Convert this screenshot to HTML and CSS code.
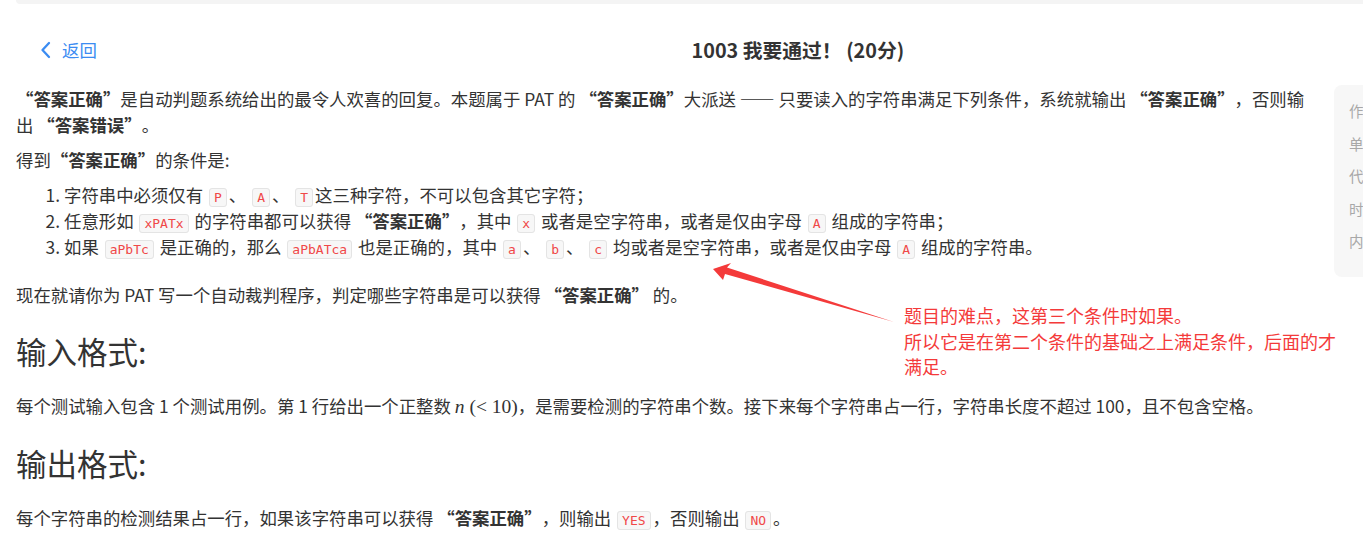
FILE: index.html
```html
<!DOCTYPE html>
<html lang="zh-CN">
<head>
<meta charset="utf-8">
<title>1003 我要通过！</title>
<link rel="stylesheet" href="styles.css">
</head>
<body>
<div class="topbar"></div>
<header class="header">
  <a class="back" href="#">
    <svg class="back-icon" width="12" height="18" viewBox="0 0 12 18"><path d="M9 2 L2.5 9 L9 16" fill="none" stroke="#3b8cf2" stroke-width="2.3" stroke-linecap="round" stroke-linejoin="round"/></svg>
    <span>返回</span>
  </a>
  <h1 class="title">1003 我要通过！ (20分)</h1>
</header>
<div class="main">
  <div class="content">
    <p class="p-first"><b>“答案正确”</b>是自动判题系统给出的最令人欢喜的回复。本题属于 PAT 的 <b>“答案正确”</b>大派送 —— 只要读入的字符串满足下列条件，系统就输出 <b>“答案正确”</b>，否则输出 <b>“答案错误”</b>。</p>
    <p class="p-cond">得到<b>“答案正确”</b>的条件是:</p>
    <ol class="rules">
      <li>字符串中必须仅有 <code>P</code>、 <code>A</code>、 <code>T</code>这三种字符，不可以包含其它字符；</li>
      <li>任意形如 <code>xPATx</code> 的字符串都可以获得 <b>“答案正确”</b>，其中 <code>x</code> 或者是空字符串，或者是仅由字母 <code>A</code> 组成的字符串；</li>
      <li>如果 <code>aPbTc</code> 是正确的，那么 <code>aPbATca</code> 也是正确的，其中 <code>a</code>、 <code>b</code>、 <code>c</code> 均或者是空字符串，或者是仅由字母 <code>A</code> 组成的字符串。</li>
    </ol>
    <p class="p-now">现在就请你为 PAT 写一个自动裁判程序，判定哪些字符串是可以获得 <b>“答案正确”</b> 的。</p>
    <h2 class="section">输入格式:</h2>
    <p class="p-sec">每个测试输入包含 1 个测试用例。第 1 行给出一个正整数 <span class="math"><i>n</i> (&lt; 10)</span>，是需要检测的字符串个数。接下来每个字符串占一行，字符串长度不超过 100，且不包含空格。</p>
    <h2 class="section">输出格式:</h2>
    <p class="p-sec">每个字符串的检测结果占一行，如果该字符串可以获得 <b>“答案正确”</b>，则输出 <code>YES</code>，否则输出 <code>NO</code>。</p>
  </div>
  <aside class="sidebar">
    <div class="side-item">作</div>
    <div class="side-item">单</div>
    <div class="side-item">代</div>
    <div class="side-item">时</div>
    <div class="side-item">内</div>
  </aside>
</div>
<svg class="arrow" width="1363" height="553" viewBox="0 0 1363 553">
  <polygon points="713,269 731,263 727,267.5 894,322 725,274 723,280" fill="#f43a3a"/>
</svg>
<div class="note">题目的难点，这第三个条件时如果。<br>所以它是在第二个条件的基础之上满足条件，后面的才满足。</div>
</body>
</html>
```

FILE: styles.css
```css
html, body {
  margin: 0;
  padding: 0;
  overflow: hidden;
  background: #fff;
}
body {
  position: relative;
  width: 1363px;
  height: 553px;
  font-family: "Noto Sans CJK SC", "Noto Sans", sans-serif;
  color: #333;
  font-size: 17.4px;
  line-height: 26px;
  text-spacing-trim: space-all;
}
.topbar {
  height: 4px;
  margin-left: 16px;
  background: #f4f4f4;
  border-bottom-left-radius: 8px;
}
.header {
  display: flex;
  align-items: center;
  padding: 33px 0 22px 40px;
  height: 26px;
}
.back {
  display: flex;
  align-items: center;
  gap: 10px;
  color: #3b8cf2;
  text-decoration: none;
  font-size: 17.4px;
}
.back-icon {
  display: block;
}
.title {
  flex: 1;
  margin: 0;
  padding-left: 136px;
  text-align: center;
  font-size: 19.8px;
  font-weight: 700;
  color: #333;
  line-height: 26px;
}
.main {
  display: flex;
  padding-left: 16px;
}
.content {
  width: 1300px;
  flex-shrink: 0;
  padding-top: 1px;
}
.sidebar {
  flex-shrink: 0;
  width: 220px;
  height: 192px;
  margin-left: 18px;
  box-sizing: border-box;
  padding: 10px 0 0 15px;
  background: #f7f7f7;
  border-radius: 8px;
  color: #a8a8a8;
  font-size: 14.5px;
  line-height: 32.5px;
  white-space: nowrap;
}
p {
  margin: 0;
}
b {
  font-weight: 700;
  color: #333;
}
.p-cond {
  margin-top: 9px;
}
.rules {
  margin: 9px 0 0;
  padding-left: 48px;
}
.p-now {
  margin-top: 22px;
}
.section {
  margin: 23px 0 0;
  font-size: 30.5px;
  font-weight: 400;
  line-height: 40px;
  color: #333;
}
.p-sec {
  margin-top: 22px;
}
code {
  font-family: "DejaVu Sans Mono", "Liberation Mono", monospace;
  font-size: 13px;
  line-height: 16px;
  color: #f04848;
  background: #f7f7f7;
  border: 1px solid #e4e4e4;
  border-radius: 3px;
  padding: 1px 4px;
  margin: 0 2px;
}
.math {
  font-family: "Liberation Serif", "DejaVu Serif", serif;
  font-size: 19.5px;
}
.arrow {
  position: absolute;
  left: 0;
  top: 0;
  pointer-events: none;
}
.note {
  position: absolute;
  left: 904px;
  top: 303px;
  width: 440px;
  color: #f43a3a;
  font-size: 18px;
  line-height: 25.5px;
}
```
